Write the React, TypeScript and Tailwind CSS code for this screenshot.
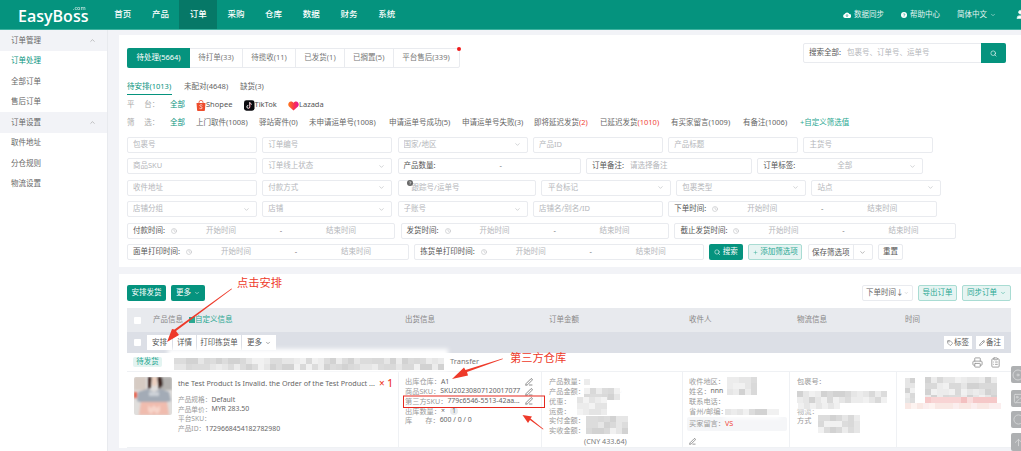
import { ChevronDown, ChevronUp, Clock, Pencil, PenLine, Plus, Printer, ClipboardList, Search, Tag, User, Disc, Image, Circle, ArrowUp } from "lucide-react";
import type { ReactNode } from "react";

const navItems = ["首页", "产品", "订单", "采购", "仓库", "数据", "财务", "系统"];
const filters = [
  { text: "上门取件", n: "(1008)", w: "w-[63px]" },
  { text: "驿站寄件", n: "(0)", w: "w-[50px]" },
  { text: "未申请运单号", n: "(1008)", w: "w-[80px]" },
  { text: "申请运单号成功", n: "(5)", w: "w-[73px]" },
  { text: "申请运单号失败", n: "(3)", w: "w-[72px]" },
  { text: "即将延迟发货", n: "(2)", w: "w-[66px]", red: true },
  { text: "已延迟发货", n: "(1010)", w: "w-[71px]", red: true },
  { text: "有买家留言", n: "(1009)", w: "w-[72px]" },
  { text: "有备注", n: "(1006)", w: "w-[57px]" },
];

function Field({ w, text, select, children }: { w: string; text?: string; select?: boolean; children?: ReactNode }) {
  return (
    <div className={`${w} flex h-4 shrink-0 items-center rounded-[2px] border border-[#e9ebef] bg-white pr-[6px] pl-[5px] text-[7.5px] text-[#b4b6ba]`}>
      {children ?? <span className="flex-1 truncate">{text}</span>}
      {select && <ChevronDown className="h-[7px] w-[7px] shrink-0 text-[#b4b6ba]" />}
    </div>
  );
}

function DateField({ w, label }: { w: string; label: string }) {
  return (
    <div className={`${w} flex h-4 shrink-0 items-center rounded-[2px] border border-[#e9ebef] bg-white pl-[5px] text-[7.5px] text-[#b4b6ba]`}>
      <span className="text-[#555]">{label}</span>
      <Clock className="ml-[6px] h-[6px] w-[6px] shrink-0" />
      <div className="ml-[14px] grid w-[180px] grid-cols-3 text-center">
        <span>开始时间</span>
        <span className="text-[#777]">-</span>
        <span>结束时间</span>
      </div>
    </div>
  );
}

function Row({ label, value }: { label: string; value?: ReactNode }) {
  return (
    <div className="flex h-[9.7px] items-center whitespace-nowrap">
      <span className="text-[#9a9a9a]">{label}</span>
      {value && <span className="text-[6.9px] text-[#666]">{value}</span>}
    </div>
  );
}

function hash(a: number, b: number) {
  const s = Math.sin(a * 12.9898 + b * 78.233) * 43758.5453;
  return s - Math.floor(s);
}

// pixelated patches that hide customer data in the picture
function Mosaic({ x, y, w, h, size = 6, colors }: { x: number; y: number; w: number; h: number; size?: number; colors: string[] }) {
  const cells = [];
  for (let i = 0; i * size < w; i++) {
    for (let j = 0; j * size < h; j++) {
      const c = colors[Math.floor(hash(x + i, y + j) * colors.length)];
      cells.push(<rect key={`${i}-${j}`} x={x + i * size} y={y + j * size} width={size} height={size} fill={c} />);
    }
  }
  return <g>{cells}</g>;
}

const greys = ["#f1f1f1", "#e6e6e6", "#dcdcdc", "#d2d2d2", "#ececec", "#d9d9d9"];
const pinks = ["#f8d4d4", "#f5c8c8", "#f9dddd", "#f3c0c0"];

function Overlay() {
  return (
    <svg className="pointer-events-none absolute inset-0" width="1021" height="451" viewBox="0 0 1021 451">
      <defs>
        <filter id="soft" x="-20%" y="-20%" width="140%" height="140%"><feGaussianBlur stdDeviation="0.7" /></filter>
        <filter id="halo" x="-20%" y="-40%" width="140%" height="180%"><feGaussianBlur stdDeviation="2" /></filter>
      </defs>
      {/* white smears under the mosaic */}
      <g filter="url(#halo)" fill="#fff">
        <rect x="168" y="349" width="280" height="22" />
        <rect x="583" y="377" width="52" height="18" />
        <rect x="574" y="396" width="60" height="12" />
        <rect x="584" y="408" width="50" height="28" />
        <rect x="726" y="376" width="38" height="16" />
        <rect x="724" y="407" width="56" height="11" />
        <rect x="793" y="392" width="95" height="18" />
        <rect x="818" y="412" width="42" height="20" />
        <rect x="903" y="377" width="106" height="32" />
      </g>
      <g filter="url(#soft)">
        <Mosaic x={174} y={358} w={270} h={9} size={6} colors={greys} />
        <Mosaic x={584} y={379} w={6} h={6} colors={greys} />
        <Mosaic x={584} y={388} w={34} h={8} size={6} colors={greys} />
        <Mosaic x={577} y={397} w={30} h={16} size={6} colors={["#f3f3f3", "#ececec", "#e4e4e4"]} />
        <Mosaic x={586} y={416} w={40} h={18} size={6} colors={greys} />
        <Mosaic x={727} y={377} w={30} h={13} size={6} colors={greys} />
        <Mosaic x={725} y={409} w={52} h={6} size={6} colors={greys} />
        <Mosaic x={797} y={391} w={90} h={12} size={6} colors={greys} />
        <Mosaic x={798} y={403} w={40} h={6} size={6} colors={["#f0f0f0", "#e6e6e6"]} />
        <Mosaic x={818} y={415} w={38} h={14} size={6} colors={greys} />
        <Mosaic x={905} y={378} w={10} h={22} size={5} colors={greys} />
        <Mosaic x={925} y={377} w={72} h={20} size={6} colors={greys} />
        <Mosaic x={925} y={397} w={72} h={6} size={6} colors={pinks} />
        <Mosaic x={905} y={403} w={96} h={5} size={6} colors={["#fbeeee", "#fdf3f0", "#f9e8e4"]} />
      </g>
      {/* red annotations */}
      <rect x="403.5" y="396" width="141" height="11.5" fill="none" stroke="#e6281e" strokeWidth="1" />
      <polygon points="232,289 176,331 179,335 167,342 172,329 174.5,329.5 231.5,288.5" fill="#ee3a2a" />
      <polygon points="503,359 467,372 468,375.5 452,379 464,367.5 465.5,370 502.5,358.5" fill="#ee3a2a" />
      <polygon points="543,429.5 530,420 528,423 522.5,415 532,416.5 530.5,418.5 543.5,429" fill="#ee3a2a" />
    </svg>
  );
}

function Photo() {
  return (
    <svg className="h-[38px] w-[38px] shrink-0 rounded-[2px]" viewBox="0 0 38 38">
      <defs><filter id="ph"><feGaussianBlur stdDeviation="0.9" /></filter></defs>
      <rect width="38" height="38" fill="#e0dedc" />
      <g filter="url(#ph)">
        <rect x="0" y="0" width="12" height="13" fill="#d6cbc3" />
        <rect x="27" y="0" width="11" height="13" fill="#b4b2b0" />
        <rect x="0" y="15" width="3" height="6" fill="#e8553a" />
        <path d="M14 0h4l-1 10-3 3zM23 0h5l1 8-4 5z" fill="#3d2620" />
        <path d="M18 0h5v8q-2.500 2-5 0z" fill="#ecd0c0" />
        <path d="M4 15l9-3 7 3 7-3 8 3 2 9-9 2H9l-6-2z" fill="#a3abb6" />
        <path d="M15 15h10v4H15z" fill="#cdd2d8" />
        <path d="M7 25h26l2 13H5z" fill="#f0bcae" />
        <path d="M14 28l3 3 3-3 3 3 3-3v6l-3 3-3-3-3 3-3-3z" fill="#f7d5ca" />
      </g>
    </svg>
  );
}

export default function App() {
  return (
    <div className="relative h-[451px] w-[1021px] overflow-hidden bg-[#f2f3f7] [font-family:'Noto_Sans','Noto_Sans_CJK_SC',sans-serif] text-[7.5px] text-[#666]">
      {/* header */}
      <header className="flex h-[30px] items-stretch border-b border-[#3fb3a0] bg-[#05937e] text-white">
        <div className="relative ml-[18px] w-[86px] pt-[10px]">
          <span className="block [font-family:'Open_Sans',sans-serif] text-[16px] leading-[12px] font-semibold">EasyBoss</span>
          <span className="absolute top-[6px] left-[55px] text-[5.5px] leading-[4px] opacity-90">.com</span>
        </div>
        <nav className="flex">
          {navItems.map((item) => (
            <a
              key={item}
              className={`flex w-[37.7px] items-center justify-center text-[8.5px] font-medium ${item === "订单" ? "bg-[#067867]" : ""}`}
            >
              {item}
            </a>
          ))}
        </nav>
        <div className="ml-auto flex -translate-x-[-5px] items-center text-[7.5px] text-[#e4f4f1]">
          <svg className="mr-[3px] h-[6px] w-[8px]" viewBox="0 0 16 12">
            <path d="M4 12a4 4 0 0 1-.6-7.9A5 5 0 0 1 12.8 4 4 4 0 0 1 12 12z" fill="#fff" />
            <path d="M8 4v5M6 7l2 2 2-2" stroke="#05937e" strokeWidth="1.3" fill="none" />
          </svg>
          <span>数据同步</span>
          <svg className="mr-[3px] ml-[17px] h-[6px] w-[6px]" viewBox="0 0 12 12">
            <circle cx="6" cy="6" r="6" fill="#fff" />
            <path d="M4.5 4.6A1.6 1.6 0 1 1 6 6.6v.8M6 8.6v1" stroke="#05937e" strokeWidth="1.2" fill="none" />
          </svg>
          <span>帮助中心</span>
          <span className="ml-[17px]">简体中文</span>
          <ChevronDown className="ml-[3px] h-[6px] w-[6px]" />
          <User className="ml-[19px] h-[11px] w-[11px] fill-white" />
        </div>
      </header>

      <div className="flex">
        {/* sidebar */}
        <aside className="h-[421px] w-[108px] shrink-0 border-r border-[#e8eaee] bg-white text-[7.5px] text-[#666]">
          {[
            { title: "订单管理", items: ["订单处理", "全部订单", "售后订单"] },
            { title: "订单设置", items: ["取件地址", "分仓规则", "物流设置"] },
          ].map((group) => (
            <div key={group.title}>
              <div className="flex h-[20.5px] items-center justify-between bg-[#f2f3f7] pr-[11px] pl-[11px]">
                <span>{group.title}</span>
                <ChevronUp className="h-[7px] w-[7px] text-[#999]" />
              </div>
              {group.items.map((item) => (
                <div key={item} className={`flex h-[20.5px] items-center pl-[11px] ${item === "订单处理" ? "text-[#05937e]" : ""}`}>
                  {item}
                </div>
              ))}
            </div>
          ))}
        </aside>

        {/* main */}
        <main className="min-w-0 flex-1 pt-[5px] pl-[11px]">
          <section className="bg-white pr-[15px] pb-[7px] pl-[8px]">
            <div className="flex h-[32.5px] items-start justify-between">
              <div className="relative mt-[13px] flex h-[19.5px] rounded-[2px] border border-[#e9ebef] text-[7.5px] text-[#777]">
                <span className="-my-px -ml-px flex w-[63px] items-center justify-center rounded-l-[2px] bg-[#05937e] text-white">待处理(5664)</span>
                <span className="flex w-[53px] items-center justify-center border-r border-[#e9ebef]">待打单(33)</span>
                <span className="flex w-[53px] items-center justify-center border-r border-[#e9ebef]">待揽收(11)</span>
                <span className="flex w-[49px] items-center justify-center border-r border-[#e9ebef]">已发货(1)</span>
                <span className="flex w-[48.5px] items-center justify-center border-r border-[#e9ebef]">已搁置(5)</span>
                <span className="flex w-[65px] items-center justify-center">平台售后(339)</span>
                <span className="absolute -top-[2px] -right-[2px] h-1 w-1 rounded-full bg-[#f01a1a]" />
              </div>
              <div className="mt-[8px] flex h-5 w-[203px] rounded-[2px] border border-[#e9ebef]">
                <div className="flex flex-1 items-center pl-[5px]">
                  <span className="text-[#555]">搜索全部:</span>
                  <span className="ml-[6px] text-[#b4b6ba]">包裹号、订单号、运单号</span>
                </div>
                <div className="-my-px -mr-px flex w-[25px] items-center justify-center rounded-r-[2px] bg-[#05937e]">
                  <Search className="h-[7px] w-[7px] text-white" />
                </div>
              </div>
            </div>

            <div className="mt-[12px] flex h-[15px] items-start text-[7.5px] leading-[13px] text-[#666]">
              <span className="h-[15px] w-[45px] border-b-[1.5px] border-[#05937e] whitespace-nowrap text-[#05937e]">待安排(1013)</span>
              <span className="ml-[12px] w-[45px] whitespace-nowrap">未配对(4648)</span>
              <span className="ml-[11px] whitespace-nowrap">缺货(3)</span>
            </div>

            <div className="mt-[4.5px] flex h-[12px] items-center">
              <span className="w-[36px] whitespace-pre text-[#aaa]">平     台：</span>
              <span className="ml-[7px] w-[26px] text-[#05937e]">全部</span>
              <svg className="h-[11px] w-[10px] shrink-0" viewBox="0 0 10 11">
                <path d="M0.5 3h9l-.6 7.2a.8.8 0 0 1-.8.8H1.900a.8.8 0 0 1-.8-.8z" fill="#ee4d2d" />
                <path d="M3 3.500V2.400a2 2 0 0 1 4 0v1.100" stroke="#ee4d2d" strokeWidth=".8" fill="none" />
                <path d="M6.400 5.200C5 4.200 3.400 4.900 4 6c.5.8 2.400.7 2.200 2-.2 1-1.900.9-2.800.2" stroke="#fff" strokeWidth=".7" fill="none" />
              </svg>
              <span className="w-[38px] text-[7.5px] text-[#555]">Shopee</span>
              <svg className="h-[11px] w-[10.5px] shrink-0" viewBox="0 0 11 11">
                <rect width="11" height="11" rx="2.500" fill="#0b0b0f" />
                <path d="M6 2.200v4.700a1.500 1.500 0 1 1-1.500-1.500M6 2.200c.2 1.200 1 1.900 2.200 2" stroke="#fff" strokeWidth="1" fill="none" />
                <path d="M6.400 2.500v4.700a1.500 1.500 0 0 1-1.500 1.500" stroke="#ff3b5c" strokeWidth=".4" fill="none" />
              </svg>
              <span className="w-[33.5px] text-[7.5px] text-[#555]">TikTok</span>
              <svg className="h-[11px] w-[11px] shrink-0" viewBox="0 0 11 11">
                <defs>
                  <linearGradient id="lz" x1="0" x2="1" y1="0" y2="0">
                    <stop offset="0" stopColor="#ff7a1a" />
                    <stop offset=".55" stopColor="#f8324f" />
                    <stop offset="1" stopColor="#e8139c" />
                  </linearGradient>
                </defs>
                <path d="M5.500 10.500 1 6.500C-.6 4.800.4 1.500 3 1.500c1.200 0 2 .6 2.500 1.400.5-.8 1.300-1.400 2.500-1.400 2.600 0 3.600 3.300 2 5z" fill="url(#lz)" />
              </svg>
              <span className="text-[7.5px] text-[#555]">Lazada</span>
            </div>

            <div className="mt-[5.5px] flex h-[12px] items-center whitespace-nowrap text-[#666]">
              <span className="w-[36px] whitespace-pre text-[#aaa]">筛     选：</span>
              <span className="ml-[7px] w-[26px] text-[#05937e]">全部</span>
              {filters.map((f) => (
                <span key={f.text} className={`${f.w} shrink-0`}>
                  {f.text}
                  <span className={f.red ? "text-[#f0443a]" : ""}>{f.n}</span>
                </span>
              ))}
              <span className="text-[#2aa892]">+自定义筛选值</span>
            </div>

            <div className="mt-[8px] flex flex-col gap-[5.5px]">
              <div className="flex gap-[5.3px]">
                <Field w="w-[130px]" text="包裹号" />
                <Field w="w-[130px]" text="订单编号" />
                <Field w="w-[130px]" text="国家/地区" select />
                <Field w="w-[130px]" text="产品ID" />
                <Field w="w-[130px]" text="产品标题" />
                <Field w="w-[130px]" text="主货号" />
              </div>
              <div className="flex gap-[5.3px]">
                <Field w="w-[130px]" text="商品SKU" />
                <Field w="w-[130px]" text="订单线上状态" select />
                <Field w="w-[183px]">
                  <span className="text-[#555]">产品数量:</span>
                  <span className="flex-1 pr-[8px] text-center text-[#777]">-</span>
                </Field>
                <Field w="w-[166px]">
                  <span className="text-[#555]">订单备注:</span>
                  <span className="ml-[6px]">请选择备注</span>
                </Field>
                <Field w="w-[166px]" select>
                  <span className="text-[#555]">订单标签:</span>
                  <span className="flex-1 pr-[15px] text-center">全部</span>
                </Field>
              </div>
              <div className="flex gap-[5.3px]">
                <Field w="w-[130px]" text="收件地址" />
                <Field w="w-[130px]" text="付款方式" select />
                <Field w="w-[138px]">
                  <span className="relative pl-[8px]">
                    <svg className="absolute -top-[2px] left-[3px] h-[6px] w-[6px]" viewBox="0 0 12 12">
                      <circle cx="6" cy="6" r="6" fill="#666" />
                      <path d="M4.500 4.600A1.600 1.600 0 1 1 6 6.600v.8M6 8.600v1" stroke="#fff" strokeWidth="1.200" fill="none" />
                    </svg>
                    跟踪号/运单号
                  </span>
                </Field>
                <Field w="w-[130px]" select>
                  <span className="flex-1 pl-[1px]">平台标记</span>
                </Field>
                <Field w="w-[130px]" text="包裹类型" select />
                <Field w="w-[130px]" text="站点" select />
              </div>
              <div className="flex gap-[5.3px]">
                <Field w="w-[130px]" text="店铺分组" select />
                <Field w="w-[130px]" text="店铺" select />
                <Field w="w-[130px]" text="子账号" select />
                <Field w="w-[130px]" text="店铺名/别名/ID" />
                <DateField w="w-[268.5px]" label="下单时间:" />
              </div>
              <div className="flex gap-[5.3px]">
                <DateField w="w-[268.3px]" label="付款时间:" />
                <DateField w="w-[268.5px]" label="发货时间:" />
                <DateField w="w-[282px]" label="截止发货时间:" />
              </div>
              <div className="flex items-center gap-[5.3px]">
                <DateField w="w-[282px]" label="面单打印时间:" />
                <DateField w="w-[289.5px]" label="拣货单打印时间:" />
                <button className="flex h-4 w-[34px] items-center justify-center gap-[2px] rounded-[2px] bg-[#05937e] text-white">
                  <Search className="h-[6.5px] w-[6.5px]" />
                  搜索
                </button>
                <button className="flex h-4 w-[54px] items-center justify-center gap-[2px] rounded-[2px] border border-[#a9dcd3] bg-[#e6f4f2] text-[#2aa892]">
                  <Plus className="h-[5px] w-[5px]" />
                  添加筛选项
                </button>
                <div className="flex h-4 w-[65px] items-center rounded-[2px] border border-[#e9ebef] text-[#555]">
                  <span className="w-[45px] border-r border-[#e9ebef] text-center leading-[14px]">保存筛选项</span>
                  <ChevronDown className="mx-auto h-[7px] w-[7px] text-[#888]" />
                </div>
                <button className="flex h-4 w-[25px] items-center justify-center rounded-[2px] border border-[#e9ebef] text-[#555]">重置</button>
              </div>
            </div>
          </section>

          <section className="mt-[7px] h-[174px] bg-white pt-[10.5px] pl-[8px]">
            <div className="flex h-4 items-center pr-[10px]">
              <button className="flex h-4 w-[39px] items-center justify-center rounded-[2px] bg-[#05937e] text-white">安排发货</button>
              <button className="ml-[5px] flex h-4 w-[34px] items-center justify-center gap-[3px] rounded-[2px] bg-[#05937e] text-white">
                更多
                <ChevronDown className="h-[6px] w-[6px]" />
              </button>
              <div className="ml-auto flex h-4 w-[51px] items-center justify-between rounded-[2px] border border-[#e9ebef] pr-[4px] pl-[3px] whitespace-nowrap text-[#666]">
                下单时间↓
                <ChevronDown className="h-[6px] w-[6px] text-[#aaa]" />
              </div>
              <button className="ml-[5px] flex h-4 w-[39px] items-center justify-center rounded-[2px] border border-[#a9dcd3] bg-[#e6f4f2] text-[#2aa892]">导出订单</button>
              <button className="ml-[5px] flex h-4 w-[49px] items-center justify-center gap-[3px] rounded-[2px] border border-[#a9dcd3] bg-[#e6f4f2] text-[#2aa892]">
                同步订单
                <ChevronDown className="h-[6px] w-[6px]" />
              </button>
            </div>

            <div className="mt-[7.5px] w-[884px]">
              <div className="grid h-[24px] grid-cols-[272px_143px_141px_107px_107px_114px] items-center bg-[#e8eaee] text-[#888]">
                <div className="flex items-center pl-[7px]">
                  <span className="h-[7px] w-[7px] rounded-[1px] bg-white" />
                  <span className="ml-[12px]">产品信息</span>
                  <span className="ml-[6px] h-[6px] w-[6px] bg-[#2aa892]" />
                  <span className="text-[#2aa892]">自定义信息</span>
                </div>
                <div className="pl-[6px]">出货信息</div>
                <div className="pl-[7px]">订单金额</div>
                <div className="pl-[6px]">收件人</div>
                <div className="pl-[7px]">物流信息</div>
                <div className="pl-[8px]">时间</div>
              </div>

              <div className="flex h-[21px] items-center bg-[#dcdfe6] pr-[7px] pl-[7px] text-[#555]">
                <span className="h-[7px] w-[7px] rounded-[1px] bg-white" />
                <div className="ml-[6px] flex h-[15px] items-center gap-px">
                  <span className="flex h-full w-[25px] items-center justify-center bg-white">安排</span>
                  <span className="flex h-full w-[23px] items-center justify-center bg-white">详情</span>
                  <span className="flex h-full w-[44px] items-center justify-center bg-white">打印拣货单</span>
                  <span className="flex h-full w-[34px] items-center justify-center gap-[3px] bg-white">
                    更多
                    <ChevronDown className="h-[6px] w-[6px]" />
                  </span>
                </div>
                <span className="ml-auto flex h-[13px] w-[28px] items-center justify-center gap-px bg-white">
                  <Tag className="h-[6px] w-[6px]" />
                  标签
                </span>
                <span className="ml-[4px] flex h-[13px] w-[28px] items-center justify-center gap-px bg-white">
                  <Pencil className="h-[6px] w-[6px]" />
                  备注
                </span>
              </div>

              <div className="flex h-[19px] items-center border-b border-[#eff1f4] pl-[6px]">
                <span className="flex h-[10px] w-[29px] items-center justify-center rounded-[2px] bg-[#e3f4f1] text-[#2aa892]">待发货</span>
                <span className="ml-[288px] text-[#777]">Transfer</span>
                <Printer className="ml-auto h-[11px] w-[11px] text-[#999]" />
                <ClipboardList className="mr-[10px] ml-[7px] h-[11px] w-[11px] text-[#999]" />
              </div>

              <div className="grid h-[76px] grid-cols-[272px_143px_141px_107px_107px_114px] border-b border-[#eff1f4]">
                <div className="flex border-r border-[#eff1f4] pt-[5px] pl-[7px]">
                  <Photo />
                  <div className="ml-[6px] min-w-0 flex-1">
                    <div className="flex h-[12px] items-center">
                      <span className="w-[195px] shrink-0 text-[7.2px] whitespace-nowrap text-[#666]">
                        the Test Product Is Invalid. the Order of the Test Product ...
                      </span>
                      <span className="ml-[6px] text-[10px] font-medium whitespace-nowrap text-[#ee3a2a]">× 1</span>
                    </div>
                    <div className="mt-[6px] text-[6.7px]">
                      <Row label="产品规格：" value="Default" />
                      <Row label="产品单价：" value="MYR 283.50" />
                      <Row label="平台SKU：" />
                      <Row label="产品ID：" value="1729668454182782980" />
                    </div>
                  </div>
                </div>

                <div className="border-r border-[#eff1f4] pt-[5px] pr-[8px] pl-[6px] text-[7.2px]">
                  <div className="flex items-center justify-between">
                    <Row label="出库仓库：" value="A1" />
                    <PenLine className="h-[8px] w-[8px] text-[#555]" />
                  </div>
                  <div className="flex items-center justify-between">
                    <Row label="商品SKU：" value="SKU20230807120017077" />
                    <PenLine className="h-[8px] w-[8px] text-[#555]" />
                  </div>
                  <div className="flex items-center justify-between">
                    <Row label="第三方SKU：" value="779c6546-5513-42aa..." />
                    <PenLine className="h-[8px] w-[8px] text-[#555]" />
                  </div>
                  <Row
                    label="出库数量："
                    value={
                      <span className="flex items-center">
                        ×
                        <span className="ml-[5px] flex h-[8px] w-[8px] items-center justify-center rounded-full bg-[#e8eaee]">1</span>
                      </span>
                    }
                  />
                  <Row label={"库\u00a0\u00a0\u00a0\u00a0\u00a0\u00a0\u00a0存："} value="600 / 0 / 0" />
                </div>

                <div className="relative border-r border-[#eff1f4] pt-[5px] pl-[7px] text-[7.2px]">
                  <Row label="产品数量：" />
                  <Row label="产品金额：" value={<span className="ml-[33px]">0</span>} />
                  <Row label="优惠：" />
                  <Row label="运费：" />
                  <Row label="实付金额：" />
                  <Row label="实收金额：" />
                  <div className="mt-[1px] pl-[35px] text-[#777]">(CNY 433.64)</div>
                </div>

                <div className="border-r border-[#eff1f4] pt-[5px] pl-[6px] text-[7.2px]">
                  <Row label="收件地区：" />
                  <Row label="姓名：" value="nnn" />
                  <Row label="联系电话：" />
                  <Row label="省州/邮编：" />
                  <div className="mt-[1px] -ml-[2px] flex h-[14px] w-[100px] items-center rounded-[2px] bg-[#f5f6f8] pl-[2px]">
                    <span className="text-[#9a9a9a]">买家留言：</span>
                    <span className="text-[#f0443a]">VS</span>
                  </div>
                  <PenLine className="mt-[7px] h-[7px] w-[7px] text-[#555]" />
                </div>

                <div className="border-r border-[#eff1f4] pt-[5px] pl-[7px] text-[7.2px]">
                  <Row label="包裹号：" />
                  <div className="h-[19.4px]" />
                  <Row label="物流：" />
                  <Row label="方式" />
                </div>

                <div />
              </div>
            </div>
          </section>
        </main>
      </div>

      <Overlay />

      {/* annotation labels */}
      <span className="absolute top-[276px] left-[237px] text-[11.25px] leading-[14px] text-[#ee3a2a]">点击安排</span>
      <span className="absolute top-[351px] left-[510px] text-[11.25px] leading-[14px] text-[#ee3a2a]">第三方仓库</span>

      {/* floating side tabs */}
      <div className="absolute top-[366px] right-0 flex w-[10px] flex-col overflow-hidden text-[#d4d5d6]">
        <span className="flex h-[17px] items-center rounded-l-[2px] bg-[#aeb0b2] pl-[1px]"><Disc className="h-[12px] w-[12px] shrink-0" /></span>
        <span className="mt-[7px] flex h-[17px] items-center rounded-l-[2px] bg-[#aeb0b2] pl-[2px]"><Image className="h-[11px] w-[11px] shrink-0" /></span>
        <span className="mt-[4px] flex h-[17px] items-center rounded-l-[2px] bg-[#aeb0b2] pl-[2px]"><Circle className="h-[11px] w-[11px] shrink-0" /></span>
        <span className="mt-[5px] flex h-[18px] items-center rounded-l-[2px] bg-[#aeb0b2] pl-[2px]"><ArrowUp className="h-[11px] w-[11px] shrink-0" /></span>
      </div>
    </div>
  );
}
